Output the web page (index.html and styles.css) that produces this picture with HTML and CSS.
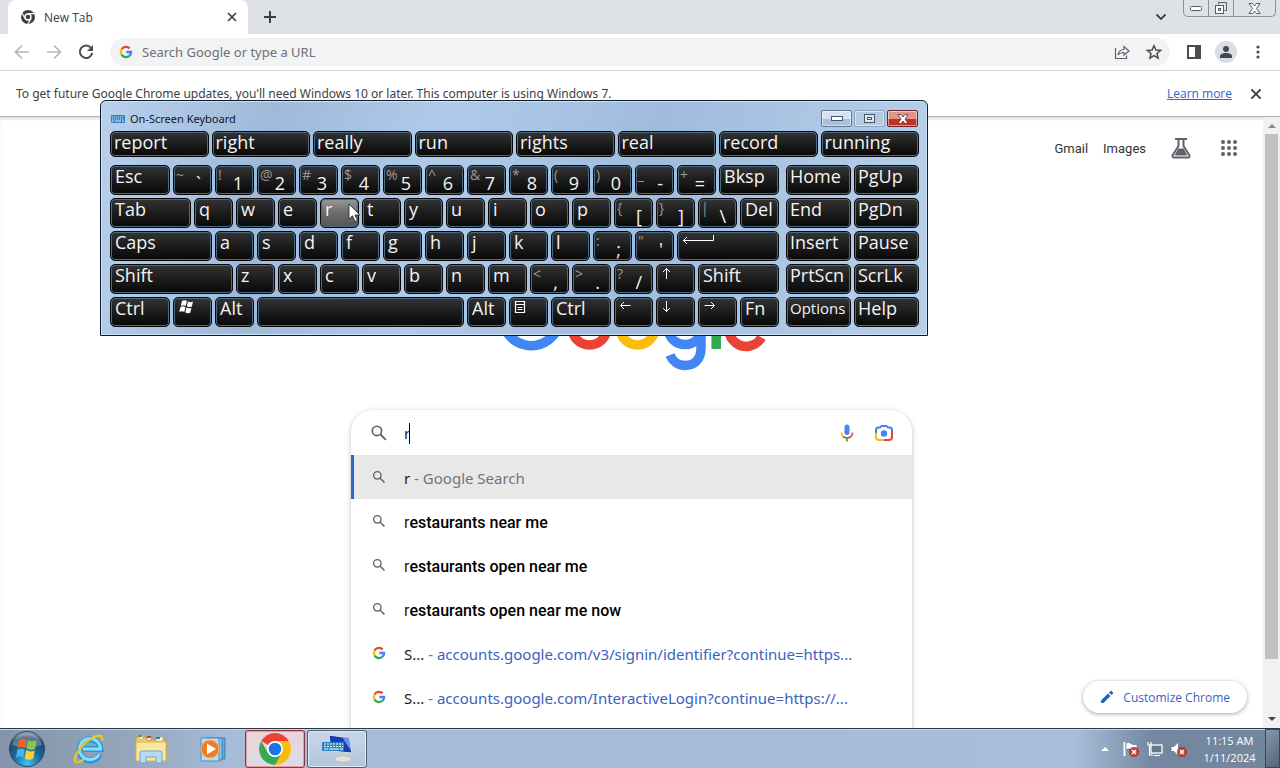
FILE: index.html
```html
<!DOCTYPE html>
<html lang="en">
<head>
    <meta charset="utf-8">
    <title>New Tab</title>
    <link rel="stylesheet" href="styles.css">
</head>
<body>
<svg class="defs" width="0" height="0">
    <symbol id="g-logo" viewBox="0 0 24 24">
        <path d="M4.5 7.6A8.7 8.7 0 0 1 18.2 5.8" fill="none" stroke="#ea4335" stroke-width="4"/>
        <path d="M4.5 7.6A8.7 8.7 0 0 0 4.5 16.4" fill="none" stroke="#fbbc05" stroke-width="4"/>
        <path d="M4.5 16.4A8.7 8.7 0 0 0 17.6 18.7" fill="none" stroke="#34a853" stroke-width="4"/>
        <path d="M17.6 18.7A8.7 8.7 0 0 0 20.7 12H12.5" fill="none" stroke="#4285f4" stroke-width="4"/>
    </symbol>
    <symbol id="glass" viewBox="0 0 24 24">
        <circle cx="9.5" cy="9.5" r="5.6" fill="none" stroke="#5f6368" stroke-width="2"/>
        <path d="M13.8 13.8L20.2 20.2" stroke="#5f6368" stroke-width="2.2"/>
    </symbol>
    <symbol id="cross" viewBox="0 0 12 12">
        <path d="M2 2L10 10M10 2L2 10" stroke="#3c4043" stroke-width="1.7"/>
    </symbol>
    <symbol id="denied" viewBox="0 0 10 10">
        <circle cx="5" cy="5" r="4.7" fill="#d23a35" stroke="#8e1a18" stroke-width=".5"/>
        <path d="M3 3L7 7M7 3L3 7" stroke="#fff" stroke-width="1.5"/>
    </symbol>
</svg>

<div id="browser">
    <div id="tabs">
        <div class="tab">
            <svg width="16" height="16" viewBox="0 0 16 16">
                <circle cx="8" cy="8" r="7" fill="#3c4043"/>
                <path d="M8 4.6H14.4M5 9.6L1.9 4.1M11 9.6L7.8 15.1" stroke="#fff" stroke-width="1.1"/>
                <circle cx="8" cy="8" r="3" fill="#3c4043" stroke="#fff" stroke-width="1.4"/>
            </svg>
            <span>New Tab</span>
            <button class="plain" aria-label="Close tab"><svg width="12" height="12"><use href="#cross"/></svg></button>
        </div>
        <button class="plain new-tab" aria-label="New tab"><svg width="14" height="14" viewBox="0 0 14 14"><path d="M7 1V13M1 7H13" stroke="#3c4043" stroke-width="2"/></svg></button>
        <button class="plain tab-search" aria-label="Search tabs"><svg width="12" height="8" viewBox="0 0 12 8"><path d="M1.5 1.5L6 6L10.500 1.500" fill="none" stroke="#3c4043" stroke-width="1.800"/></svg></button>
        <div class="win-controls">
            <button aria-label="Minimize"><svg width="12" height="5" viewBox="0 0 12 5"><rect x=".5" y=".5" width="11" height="4" rx="1" fill="#fff" stroke="#555b66"/></svg></button>
            <button aria-label="Restore"><svg width="14" height="14" viewBox="0 0 14 14"><path d="M4.500 3.500V1.500H12.500V9.500H10.500" fill="none" stroke="#555b66"/><rect x="1.500" y="4.500" width="8" height="8" fill="#fff" stroke="#555b66"/><rect x="4.500" y="7.500" width="2" height="2" fill="none" stroke="#555b66"/></svg></button>
            <button aria-label="Close" class="wide"><svg width="13" height="11" viewBox="0 0 13 11"><path d="M1 .5H4.500L6.500 3L8.500 .5H12L8.500 5.500L12 10.500H8.500L6.500 8L4.500 10.500H1L4.500 5.500Z" fill="#fff" stroke="#555b66"/></svg></button>
        </div>
    </div>

    <div id="toolbar">
        <button class="plain" aria-label="Back"><svg width="16" height="16" viewBox="0 0 16 16"><path d="M15 8H2M8 1.500L1.500 8L8 14.500" fill="none" stroke="#b5b7ba" stroke-width="1.700"/></svg></button>
        <button class="plain" aria-label="Forward"><svg width="16" height="16" viewBox="0 0 16 16"><path d="M1 8H14M8 1.500L14.500 8L8 14.500" fill="none" stroke="#b5b7ba" stroke-width="1.700"/></svg></button>
        <button class="plain" aria-label="Reload"><svg width="16" height="16" viewBox="0 0 16 16"><path d="M13 4A6.200 6.200 0 1 0 14.200 9" fill="none" stroke="#4a4d51" stroke-width="2"/><path d="M15 1V7H9Z" fill="#4a4d51"/></svg></button>
        <div class="omnibox">
            <svg width="14" height="14"><use href="#g-logo"/></svg>
            <input type="text" aria-label="Address" placeholder="Search Google or type a URL">
            <button class="plain" aria-label="Share"><svg width="16" height="16" viewBox="0 0 16 16"><path d="M1.500 4V14.500H12.500V11.500M4 11C4.500 7.500 6.500 5.500 10 5.500V2.500L15 7L10 11V8.500C7.500 8.500 5.500 9 4 11Z" fill="none" stroke="#5f6368" stroke-width="1.200"/></svg></button>
            <button class="plain" aria-label="Bookmark"><svg width="16" height="16" viewBox="0 0 16 16"><path d="M8 1.700L9.900 6L14.600 6.400L11 9.500L12.100 14.100L8 11.600L3.900 14.100L5 9.500L1.400 6.400L6.100 6Z" fill="none" stroke="#4a4d51" stroke-width="1.500"/></svg></button>
        </div>
        <button class="plain" aria-label="Side panel"><svg width="16" height="16" viewBox="0 0 16 16"><rect x="2" y="2" width="12" height="12" fill="#fff" stroke="#4a4d51" stroke-width="2"/><path d="M9 2H14V14H9Z" fill="#4a4d51"/></svg></button>
        <button class="plain avatar" aria-label="Profile"><svg width="22" height="22" viewBox="0 0 22 22"><circle cx="11" cy="11" r="11" fill="#dadfe3"/><circle cx="11" cy="8" r="3" fill="#42485a"/><path d="M5 17V15C5 13 8 12 11 12S17 13 17 15V17Z" fill="#42485a"/></svg></button>
        <button class="plain" aria-label="Menu"><svg width="16" height="16" viewBox="0 0 16 16" fill="#4a4d51"><circle cx="8" cy="3" r="1.600"/><circle cx="8" cy="8" r="1.600"/><circle cx="8" cy="13" r="1.600"/></svg></button>
    </div>

    <div id="infobar">
        <span>To get future Google Chrome updates, you'll need Windows 10 or later. This computer is using Windows 7.</span>
        <a href="#">Learn more</a>
        <button class="plain" aria-label="Dismiss"><svg width="14" height="14"><use href="#cross"/></svg></button>
    </div>

    <div id="viewport">
        <main>
            <nav>
                <a href="#">Gmail</a>
                <a href="#">Images</a>
                <a href="#" class="labs" aria-label="Search Labs"><svg width="22" height="22" viewBox="0 0 22 22"><path d="M5 2H17M8.500 2V9L2.500 18.500Q2 20.500 4 20.500H18Q20 20.500 19.500 18.500L13.500 9V2" fill="none" stroke="#5f6368" stroke-width="2"/><path d="M8.500 11.500H13.500L17.500 18.500H4.500Z" fill="#5f6368"/></svg></a>
                <a href="#" class="apps" aria-label="Google apps"><svg width="18" height="18" viewBox="0 0 18 18" fill="#5f6368"><circle cx="3" cy="3" r="2"/><circle cx="9" cy="3" r="2"/><circle cx="15" cy="3" r="2"/><circle cx="3" cy="9" r="2"/><circle cx="9" cy="9" r="2"/><circle cx="15" cy="9" r="2"/><circle cx="3" cy="15" r="2"/><circle cx="9" cy="15" r="2"/><circle cx="15" cy="15" r="2"/></svg></a>
            </nav>
            <svg class="logo" role="img" aria-label="Google" width="272" height="92" viewBox="0 0 272 92" fill="none" stroke-width="9.500">
                <path d="M55 16A28.700 28.700 0 1 0 64 37H36" stroke="#4285f4"/>
                <circle cx="93.500" cy="47.500" r="17.500" stroke="#ea4335"/>
                <circle cx="141.500" cy="47.500" r="17.500" stroke="#fbbc05"/>
                <circle cx="189" cy="47.500" r="17" stroke="#4285f4"/>
                <path d="M205 27V68C205 80 198 85.500 189 85.500C182 85.500 176.500 81 174 75" stroke="#4285f4"/>
                <path d="M220.200 3V69" stroke="#34a853"/>
                <path d="M265.500 57.500A17.500 17.500 0 1 1 264 38L235 51" stroke="#ea4335"/>
            </svg>
            <div id="search">
                <div class="field">
                    <svg width="20" height="20"><use href="#glass"/></svg>
                    <div class="query"><input type="text" aria-label="Search" value="r"><i class="caret"></i></div>
                    <button class="plain" aria-label="Search by voice"><svg width="20" height="20" viewBox="0 0 20 20"><rect x="7.500" y="1.500" width="5" height="10.500" rx="2.500" fill="#4285f4"/><path d="M4.500 9.500Q4.500 12 6 13.500" fill="none" stroke="#fbbc05" stroke-width="1.700"/><path d="M6 13.500Q10 16.500 14 13.500Q15.500 12 15.500 9.500" fill="none" stroke="#ea4335" stroke-width="1.700"/><path d="M10 15V18.500" stroke="#34a853" stroke-width="1.700"/></svg></button>
                    <button class="plain" aria-label="Search by image"><svg width="20" height="20" viewBox="0 0 20 20" fill="none" stroke-width="2"><path d="M2 10V7Q2 4.500 4.500 4.500H6L7.500 3H12.500L14 4.500H15.500Q18 4.500 18 7V8" stroke="#4285f4"/><path d="M2 9V14Q2 17 5 17H10" stroke="#fbbc05"/><path d="M18 8V14Q18 17 15 17H10" stroke="#ea4335"/><path d="M2 6V10" stroke="#34a853"/><circle cx="10" cy="10.500" r="3.200" fill="#4285f4"/></svg></button>
                </div>
                <ul>
                    <li class="active"><svg width="16" height="16"><use href="#glass"/></svg><p>r <span>- Google Search</span></p></li>
                    <li><svg width="16" height="16"><use href="#glass"/></svg><p class="match">r<b>estaurants near me</b></p></li>
                    <li><svg width="16" height="16"><use href="#glass"/></svg><p class="match">r<b>estaurants open near me</b></p></li>
                    <li><svg width="16" height="16"><use href="#glass"/></svg><p class="match">r<b>estaurants open near me now</b></p></li>
                    <li><svg width="14" height="14"><use href="#g-logo"/></svg><p>S... <span>-</span> <a href="#">accounts.google.com/v3/signin/identifier?continue=https...</a></p></li>
                    <li><svg width="14" height="14"><use href="#g-logo"/></svg><p>S... <span>-</span> <a href="#">accounts.google.com/InteractiveLogin?continue=https://...</a></p></li>
                </ul>
            </div>
            <button id="customize"><svg width="14" height="14" viewBox="0 0 14 14" fill="#1a65c8"><path d="M1 10.500V13H3.500L10.500 6L8 3.500ZM9 2.500L11.500 5L13 3.500Q13.500 3 13 2.500L11.500 1Q11 .5 10.500 1Z"/></svg>Customize Chrome</button>
        </main>
        <div class="scrollbar"><i class="up"></i><i class="thumb"></i><i class="down"></i></div>
    </div>
</div>

<div id="keyboard">
    <div class="titlebar">
        <svg width="14" height="8" viewBox="0 0 14 8"><rect width="14" height="8" rx="1" fill="#2f83c8"/><path d="M1 2H13M1 4H13" stroke="#d8ecfa" stroke-dasharray="1 1"/><path d="M1 6H3M4 6H10M11 6H13" stroke="#d8ecfa"/></svg>
        <span>On-Screen Keyboard</span>
        <button aria-label="Minimize"><svg width="12" height="6" viewBox="0 0 12 6"><rect x=".5" y=".5" width="11" height="4" fill="#fff" stroke="#4a5568"/></svg></button>
        <button class="off" aria-label="Maximize"><svg width="11" height="10" viewBox="0 0 11 10"><rect x=".5" y=".5" width="10" height="8" fill="#dbe6f3" stroke="#4a5568"/><rect x="3.500" y="3.500" width="4" height="2" fill="#fff" stroke="#4a5568"/></svg></button>
        <button class="close" aria-label="Close"><svg width="12" height="10" viewBox="0 0 12 10"><path d="M1 .5H4L6 3L8 .5H11L8 5L11 9.500H8L6 7L4 9.500H1L4 5Z" fill="#fff" stroke="#5e3038" stroke-width=".8"/></svg></button>
    </div>
    <div class="predictions">
        <button>report</button><button>right</button><button>really</button><button>run</button><button>rights</button><button>real</button><button>record</button><button>running</button>
    </div>
    <div class="keys">
        <div class="main-keys">
            <button class="w3">Esc</button>
            <button class="dual"><sup>~</sup>`</button>
            <button class="dual"><sup>!</sup>1</button>
            <button class="dual"><sup>@</sup>2</button>
            <button class="dual"><sup>#</sup>3</button>
            <button class="dual"><sup>$</sup>4</button>
            <button class="dual"><sup>%</sup>5</button>
            <button class="dual"><sup>^</sup>6</button>
            <button class="dual"><sup>&amp;</sup>7</button>
            <button class="dual"><sup>*</sup>8</button>
            <button class="dual"><sup>(</sup>9</button>
            <button class="dual"><sup>)</sup>0</button>
            <button class="dual"><sup>_</sup>-</button>
            <button class="dual"><sup>+</sup>=</button>
            <button class="w3">Bksp</button>

            <button class="w4">Tab</button>
            <button>q</button><button>w</button><button>e</button><button class="hover">r</button><button>t</button><button>y</button><button>u</button><button>i</button><button>o</button><button>p</button>
            <button class="dual"><sup>{</sup>[</button>
            <button class="dual"><sup>}</sup>]</button>
            <button class="dual"><sup>|</sup>\</button>
            <button>Del</button>

            <button class="w5">Caps</button>
            <button>a</button><button>s</button><button>d</button><button>f</button><button>g</button><button>h</button><button>j</button><button>k</button><button>l</button>
            <button class="dual"><sup>:</sup>;</button>
            <button class="dual"><sup>"</sup>'</button>
            <button class="w5" aria-label="Enter"><svg width="32" height="16" viewBox="0 0 32 16"><path d="M31.500 3V8.500H1M5 5L1.500 8.500L5 12" fill="none" stroke="#fff"/></svg></button>

            <button class="w6">Shift</button>
            <button>z</button><button>x</button><button>c</button><button>v</button><button>b</button><button>n</button><button>m</button>
            <button class="dual"><sup>&lt;</sup>,</button>
            <button class="dual"><sup>&gt;</sup>.</button>
            <button class="dual"><sup>?</sup>/</button>
            <button aria-label="Up"><svg width="12" height="16" viewBox="0 0 12 16"><path d="M5.500 14V3.500M2 7L5.500 3.500L9 7" fill="none" stroke="#fff"/></svg></button>
            <button class="w4">Shift</button>

            <button class="w3">Ctrl</button>
            <button aria-label="Windows"><svg width="17" height="17" viewBox="0 0 17 17" fill="#fff"><path d="M4 3Q6.500 1.500 9 3L7.800 7.800Q5.500 6.500 2.800 7.800ZM10 3.500Q12.500 4.800 15 3.500L13.800 8.500Q11 9.800 8.800 8.300ZM2.500 9Q5 7.700 7.500 9L6.300 14Q4 12.500 1.200 14ZM8.500 9.500Q11 11 13.500 9.700L12.200 14.700Q9.500 16 7.300 14.500Z"/></svg></button>
            <button>Alt</button>
            <button class="w10" aria-label="Space"></button>
            <button>Alt</button>
            <button aria-label="Context menu"><svg width="13" height="16" viewBox="0 0 13 16"><path d="M1.500 3.500H10.500V14.500H1.500ZM1.500 6.500H10.500M3.500 9.500H8.500M3.500 11.500H8.500" fill="none" stroke="#fff" stroke-width="1.200"/></svg></button>
            <button class="w3">Ctrl</button>
            <button aria-label="Left"><svg width="14" height="16" viewBox="0 0 14 16"><path d="M11.500 7.500H2M5 4L1.500 7.500L5 11" fill="none" stroke="#fff"/></svg></button>
            <button aria-label="Down"><svg width="12" height="16" viewBox="0 0 12 16"><path d="M5.500 3V13.500M2 10L5.500 13.500L9 10" fill="none" stroke="#fff"/></svg></button>
            <button aria-label="Right"><svg width="14" height="16" viewBox="0 0 14 16"><path d="M1.500 7.500H11M8 4L11.500 7.500L8 11" fill="none" stroke="#fff"/></svg></button>
            <button>Fn</button>
        </div>
        <div class="nav-keys">
            <button>Home</button><button>PgUp</button>
            <button>End</button><button>PgDn</button>
            <button>Insert</button><button>Pause</button>
            <button>PrtScn</button><button>ScrLk</button>
            <button class="small">Options</button><button>Help</button>
        </div>
    </div>
    <svg class="cursor" width="13" height="20" viewBox="0 0 13 20"><path d="M1 1V16L4.500 12.800L7 18.500L9.500 17.400L7 12H11.800Z" fill="#fff" stroke="#222" stroke-width=".8"/></svg>
</div>

<footer id="taskbar">
    <button class="start" aria-label="Start">
        <svg width="38" height="38" viewBox="0 0 38 38">
            <defs>
                <radialGradient id="orb" cx=".5" cy=".9" r=".9"><stop offset="0" stop-color="#38c8f4"/><stop offset=".45" stop-color="#1b659c"/><stop offset=".8" stop-color="#234866"/><stop offset="1" stop-color="#9db6c9"/></radialGradient>
            </defs>
            <circle cx="19" cy="19" r="17.500" fill="url(#orb)" stroke="#2b4a66"/>
            <path d="M4 15A15.500 15.500 0 0 1 34 15Q19 20 4 15Z" fill="#fff" opacity=".25"/>
            <path d="M11 10Q15 7.500 18.500 9.500L17 18Q13 16 9.500 18.500Z" fill="#ef6128"/>
            <path d="M20 10Q24 12.500 28.500 10L27 19Q22.500 21 18.500 18.500Z" fill="#8cc63e"/>
            <path d="M9.200 19.800Q13 17.500 16.700 19.500L15.300 27.500Q11.500 25.500 8 28Z" fill="#48b4ec"/>
            <path d="M18.200 20Q22.500 22.500 26.700 20.500L25.300 28.500Q21 31 16.800 28.500Z" fill="#fdd035"/>
        </svg>
    </button>
    <button aria-label="Internet Explorer">
        <svg width="34" height="32" viewBox="0 0 34 32" fill="none">
            <path d="M27.500 21.500A10.500 10.500 0 1 1 28.500 16H11" stroke="#249bd8" stroke-width="6"/>
            <path d="M27 21.500A10.500 10.500 0 1 1 28.500 16H11" stroke="#8ddcf8" stroke-width="3"/>
            <path d="M4 29Q1 27 6 19Q12 9 22 4Q32 0 30 8" stroke="#e9c52c" stroke-width="2.500"/>
            <path d="M4 29Q7 30 12 26" stroke="#e9c52c" stroke-width="2"/>
        </svg>
    </button>
    <button aria-label="Explorer">
        <svg width="34" height="30" viewBox="0 0 34 30">
            <path d="M2 3H11L13 6H32V27H2Z" fill="#edcf72" stroke="#c39a36"/>
            <path d="M5 1H9V5H5ZM13 2H17V6H13ZM22 3H29V7H22Z" fill="#fff8d5" stroke="#c5a64c" stroke-width=".6"/>
            <path d="M5 2H8" stroke="#25a544" stroke-width="2"/><path d="M13 3H17" stroke="#d33c2c" stroke-width="2"/><path d="M22 4H26" stroke="#3179c4" stroke-width="2"/>
            <path d="M2 8H32V27H2Z" fill="#f8e7a0" stroke="#d7b854"/>
            <path d="M6 29V19Q6 17 8 17H26Q28 17 28 19V29H22V23H12V29Z" fill="#b5dcf3" stroke="#6ea7cc"/>
        </svg>
    </button>
    <button aria-label="Media Player">
        <svg width="30" height="28" viewBox="0 0 30 28">
            <path d="M9 3H27V24H9Z" fill="#64a9d5" stroke="#3d83b5"/><path d="M6 3H24V25H6Z" fill="#94c8e6" stroke="#3d83b5"/><path d="M3 3H21V26H3Z" fill="#b7dcf0" stroke="#4a91be"/>
            <circle cx="12" cy="14" r="9" fill="#ef7d22" stroke="#f9b478"/><path d="M9 8.500L18 14L9 19.500Z" fill="#fff"/>
        </svg>
    </button>
    <button class="running chrome" aria-label="Chrome">
        <svg width="32" height="32" viewBox="0 0 32 32">
            <path d="M16 16L2.200 8A16 16 0 0 1 29.800 8Z" fill="#ea4335"/>
            <path d="M16 8H29.800A16 16 0 0 1 16 32L23 20Z" fill="#fbbc05"/>
            <path d="M2.200 8L9.100 20Q12 24 16 24L22.900 20L16 32A16 16 0 0 1 2.200 8Z" fill="#34a853"/>
            <circle cx="16" cy="16" r="8" fill="#fff"/><circle cx="16" cy="16" r="6.300" fill="#1a73e8"/>
        </svg>
    </button>
    <button class="running" aria-label="On-Screen Keyboard">
        <svg width="32" height="30" viewBox="0 0 32 30">
            <path d="M8 1L28 4L31 19L10 17Z" fill="#183cb4" stroke="#dce1e4"/><path d="M21 3L28 4L30 17Z" fill="#6a94ea"/>
            <path d="M17 18L25 19L26 23L19 23Z" fill="#c7ccd0"/><ellipse cx="22" cy="25" rx="8" ry="3" fill="#e4e3d8" stroke="#b0b0a6" stroke-width=".5"/>
            <rect x="1" y="8" width="22" height="9" rx="1" fill="#2783c6"/><path d="M3 10H22M3 12.500H22" stroke="#fff" stroke-dasharray="2 1"/><path d="M3 15H7M8 15H18M19 15H22" stroke="#fff"/>
        </svg>
    </button>
    <div class="tray">
        <svg width="10" height="6" viewBox="0 0 10 6"><path d="M1 5L5 1L9 5Z" fill="#fff"/></svg>
        <svg width="18" height="18" viewBox="0 0 18 18"><path d="M2.500 2V16" stroke="#fff" stroke-width="2"/><path d="M4 3Q7 1.500 9 3.500T15 4V10Q11 11 9 9.500T4 10Z" fill="#fff" stroke="#4e5f72" stroke-width=".6"/><use href="#denied" x="7" y="7" width="10" height="10"/></svg>
        <svg width="18" height="18" viewBox="0 0 18 18"><rect x="5" y="5" width="11" height="8" fill="#68798d" stroke="#fff" stroke-width="1.300"/><path d="M8 15.500H14M2 2V5H5V2M3.500 5V15H7" fill="none" stroke="#fff" stroke-width="1.200"/></svg>
        <svg width="18" height="18" viewBox="0 0 18 18"><path d="M1 6.500H4L8.500 2V16L4 11.500H1Z" fill="#fff" stroke="#4e5f72" stroke-width=".6"/><use href="#denied" x="7" y="7" width="10" height="10"/></svg>
        <time>11:15 AM<br>1/11/2024</time>
    </div>
    <button class="desktop" aria-label="Show desktop"></button>
</footer>
</body>
</html>
```
FILE: styles.css
```css
* {
    box-sizing: border-box;
}

body {
    margin: 0;
    height: 100vh;
    display: flex;
    flex-direction: column;
    overflow: hidden;
    font-family: "Open Sans", sans-serif;
    font-size: 12px;
    color: #3c4043;
    background: #fff;
}

button, input {
    font: inherit;
    color: inherit;
    margin: 0;
    padding: 0;
}

svg {
    display: block;
    flex: none;
}

.defs {
    position: absolute;
}

.plain {
    border: none;
    background: none;
    display: flex;
    align-items: center;
    justify-content: center;
    flex: none;
}

#browser {
    flex: 1;
    min-height: 0;
    display: flex;
    flex-direction: column;
}

/* tab strip */
#tabs {
    height: 34px;
    flex: none;
    display: flex;
    align-items: center;
    background: #dee1e6;
    padding: 0 4px 0 8px;
}

.tab {
    width: 240px;
    height: 34px;
    display: flex;
    align-items: center;
    gap: 8px;
    padding: 0 10px 0 12px;
    background: #fff;
    border-radius: 8px 8px 0 0;
}

.tab span {
    flex: 1;
}

.new-tab {
    margin-left: 15px;
}

.tab-search {
    margin-left: auto;
    margin-right: 16px;
}

.win-controls {
    align-self: flex-start;
    display: flex;
    height: 17px;
    border: 1px solid #8c929c;
    border-top: none;
    border-radius: 0 0 5px 5px;
}

.win-controls button {
    width: 25px;
    display: flex;
    align-items: center;
    justify-content: center;
    border: none;
    border-right: 1px solid #8c929c;
    background: none;
}

.win-controls .wide {
    width: 41px;
    border-right: none;
}

/* toolbar */
#toolbar {
    height: 37px;
    flex: none;
    display: flex;
    align-items: center;
    gap: 16px;
    padding: 0 14px;
    border-bottom: 1px solid #d5d7da;
}

.omnibox {
    flex: 1;
    height: 28px;
    display: flex;
    align-items: center;
    gap: 16px;
    padding: 0 8px 0 9px;
    border-radius: 14px;
    background: #f1f3f4;
}

.omnibox input {
    flex: 1;
    margin-left: -7px;
    border: none;
    outline: none;
    background: none;
    font-family: "Noto Sans", sans-serif;
    font-size: 13px;
}

.omnibox input::placeholder {
    color: #6d7175;
}

.avatar {
    margin: 0 -3px;
}

/* info bar */
#infobar {
    height: 45px;
    flex: none;
    display: flex;
    align-items: center;
    gap: 17px;
    padding: 0 17px 0 16px;
}

#infobar span {
    flex: 1;
    font-family: "Noto Sans", sans-serif;
}

#infobar a {
    color: #2a66c8;
}

/* page */
#viewport {
    flex: 1;
    min-height: 0;
    display: flex;
    border-top: 1px solid #b4b4b4;
    box-shadow: inset 0 3px 3px -1px #ddd;
}

main {
    position: relative;
    flex: 1;
    overflow: hidden;
    display: flex;
    flex-direction: column;
    align-items: center;
}

nav {
    flex: none;
    align-self: flex-end;
    display: flex;
    align-items: center;
    height: 62px;
    padding-right: 25px;
    font: 13px Roboto, sans-serif;
}

nav a {
    color: #333;
    text-decoration: none;
    margin-right: 15px;
}

nav .labs {
    margin: 0 28px 0 9px;
}

nav .apps {
    margin: 0;
}

.logo {
    flex: none;
    margin: 101px 0 38px;
}

#search {
    flex: none;
    width: 561px;
    height: 400px;
    border-radius: 22px;
    box-shadow: 0 1px 5px rgba(32, 33, 36, .28);
    background: #fff;
    font-family: "Noto Sans", sans-serif;
    font-size: 15px;
}

.field {
    display: flex;
    align-items: center;
    height: 45px;
    padding: 0 18px;
}

.query {
    position: relative;
    flex: 1;
    margin-left: 15px;
    color: #202124;
}

.query input {
    width: 100%;
    border: none;
    outline: none;
    background: none;
}

.caret {
    position: absolute;
    left: 5px;
    top: 0;
    width: 1px;
    height: 21px;
    background: #000;
}

.field button + button {
    margin-left: 17px;
}

#search ul {
    list-style: none;
    margin: 0;
    padding: 0;
}

#search li {
    display: flex;
    align-items: center;
    height: 44px;
    padding-left: 20px;
}

#search li.active {
    background: #e8e8e8;
    border-left: 3px solid #2f66c4;
    padding-left: 17px;
}

#search li svg {
    width: 16px;
}

#search p {
    margin: 2px 0 0 17px;
    color: #202124;
    white-space: pre;
}

#search p.match {
    font-family: Roboto, sans-serif;
    font-size: 16px;
}

#search p b {
    font-weight: 500;
    color: #000;
}

#search p span {
    color: #70757a;
}

#search p a {
    color: #3b62c0;
    text-decoration: none;
}

#customize {
    position: absolute;
    right: 16px;
    bottom: 15px;
    height: 32px;
    display: flex;
    align-items: center;
    gap: 9px;
    padding: 0 17px;
    border: none;
    border-radius: 16px;
    background: #fff;
    box-shadow: 0 1px 4px rgba(0, 0, 0, .35);
    color: #3a63bd;
}

.scrollbar {
    width: 17px;
    display: flex;
    flex-direction: column;
    align-items: center;
    background: #f1f1f1;
}

.scrollbar .up, .scrollbar .down {
    border: 4px solid transparent;
    border-top-width: 0;
    border-bottom-color: #8a8a8a;
    margin: 7px 0 6px;
}

.scrollbar .down {
    border-width: 4px 4px 0;
    border-top-color: #444;
    margin: auto 0 7px;
}

.scrollbar .thumb {
    width: 13px;
    height: 86%;
    background: #c1c1c1;
}

/* on-screen keyboard, floats over the browser */
#keyboard {
    position: absolute;
    left: 100px;
    top: 100px;
    width: 828px;
    padding: 0 8px 8px 9px;
    border: 1px solid #0c1c2c;
    border-radius: 6px 6px 0 0;
    box-shadow: inset 0 0 0 1px #cfe2f5;
    background: linear-gradient(100deg, #b8d0ec, #9fbad9 20%, #b0cbe9 40%, #a0bcdd 65%, #b8d0ea);
}

.titlebar {
    display: flex;
    align-items: center;
    height: 30px;
    padding: 5px 1px 0;
    color: #0c1826;
    font-size: 11px;
}

.titlebar span {
    flex: 1;
    margin-left: 5px;
    font-family: "Noto Sans", sans-serif;
}

.titlebar button {
    width: 31px;
    height: 17px;
    margin-left: 2px;
    display: flex;
    align-items: center;
    justify-content: center;
    border: 1px solid #5f7590;
    border-radius: 2px;
    background: linear-gradient(#d5e3f3 50%, #aac0da 50%);
    box-shadow: inset 0 0 0 1px rgba(255, 255, 255, .5);
}

.titlebar .off {
    border-color: #8ca2bc;
    background: #b4cae3;
}

.titlebar .close {
    border-color: #6a2028;
    background: linear-gradient(#e0948a 50%, #c2321e 50%);
}

.predictions button, .keys button {
    display: flex;
    min-width: 0;
    padding: 0 0 0 3px;
    border: 1px solid #05080c;
    border-radius: 5px;
    background: linear-gradient(#343434, #1c1c1c 50%, #080808);
    box-shadow: inset 0 0 0 1px #4e6a80;
    color: #f4f4f4;
    font-size: 18px;
    line-height: 20px;
    text-align: left;
}

.predictions {
    display: grid;
    grid-template-columns: repeat(8, 1fr);
    gap: 3px;
}

.predictions button {
    height: 26px;
}

.keys {
    display: flex;
    gap: 7px;
    margin-top: 8px;
}

.main-keys {
    flex: 1;
    display: grid;
    grid-template-columns: repeat(32, 1fr);
    grid-auto-rows: 30px;
    gap: 3px;
}

.main-keys button {
    grid-column: span 2;
    padding-left: 4px;
}

.main-keys .w3 {
    grid-column: span 3;
}

.main-keys .w4 {
    grid-column: span 4;
}

.main-keys .w5 {
    grid-column: span 5;
}

.main-keys .w6 {
    grid-column: span 6;
}

.main-keys .w10 {
    grid-column: span 10;
}

.nav-keys {
    width: 133px;
    display: grid;
    grid-template-columns: 1fr 1fr;
    grid-auto-rows: 30px;
    gap: 3px;
}

.keys .dual {
    justify-content: space-between;
    padding: 7px 10px 0 2px;
}

.dual sup {
    margin-top: -8px;
    color: #999;
    font-size: 14px;
    line-height: 20px;
}

.keys .hover {
    background: linear-gradient(#999, #6c6c6c 50%, #555);
}

.nav-keys .small {
    font-size: 15px;
}

.cursor {
    position: absolute;
    left: 247px;
    top: 102px;
}

/* taskbar */
#taskbar {
    flex: none;
    display: flex;
    height: 40px;
    border-top: 1px solid #27384d;
    box-shadow: inset 0 1px #c8d8ea;
    background: linear-gradient(90deg, #8494ab, #94a5bc 10%, #a6bcd8 18%, #a4bcda 60%, #a7bfdb 84%, #7388a0 90%, #72869e);
}

#taskbar button {
    flex: none;
    width: 60px;
    display: flex;
    align-items: center;
    justify-content: center;
    margin: 1px 2px 0 0;
    border: none;
    border-radius: 3px;
    background: none;
}

#taskbar .start {
    width: 57px;
    padding-right: 4px;
}

#taskbar .running {
    border: 1px solid #4c5f78;
    box-shadow: inset 0 0 0 1px #e0eaf5;
    background: linear-gradient(#c8d6e6, #b4c6dc);
}

#taskbar .chrome {
    border-color: #8c3840;
    box-shadow: inset 0 0 0 1px #e99ca0;
    background: linear-gradient(#ecd4d8, #d8dce6);
}

.tray {
    margin-left: auto;
    display: flex;
    align-items: center;
    gap: 6px;
    color: #fff;
}

.tray svg:first-child {
    margin-right: 6px;
}

time {
    width: 71px;
    font-size: 11px;
    line-height: 17px;
    text-align: center;
}

#taskbar .desktop {
    width: 15px;
    margin: 0;
    border: 1px solid #33475d;
    border-radius: 0;
    background: linear-gradient(135deg, #8597aa, #52667c);
}
```
